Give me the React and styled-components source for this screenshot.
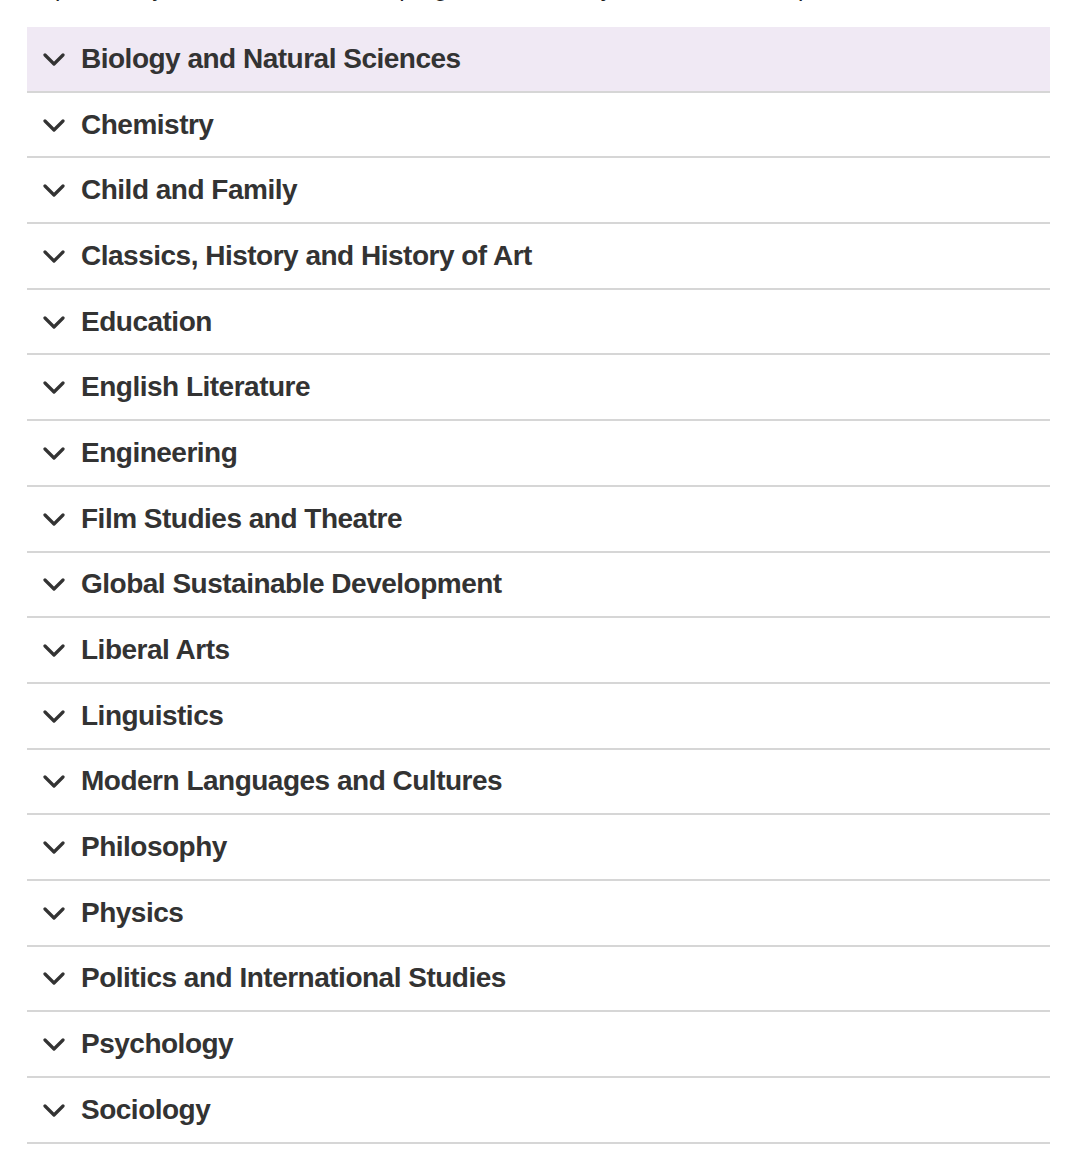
import React, { useState } from 'react';
import styled, { createGlobalStyle } from 'styled-components';

const subjects = [
  'Biology and Natural Sciences',
  'Chemistry',
  'Child and Family',
  'Classics, History and History of Art',
  'Education',
  'English Literature',
  'Engineering',
  'Film Studies and Theatre',
  'Global Sustainable Development',
  'Liberal Arts',
  'Linguistics',
  'Modern Languages and Cultures',
  'Philosophy',
  'Physics',
  'Politics and International Studies',
  'Psychology',
  'Sociology',
];

const Chevron = () => (
  <ChevronIcon viewBox="0 0 22 13" aria-hidden="true">
    <polyline points="2,2 11,11 20,2" />
  </ChevronIcon>
);

const App = () => {
  const [active, setActive] = useState(0);

  return (
    <>
      <GlobalStyle />
      <Page>
        <Intro>
          Explore subjects to find out what a programme of study is like at each department.
        </Intro>
        <Accordion>
          {subjects.map((name, i) => (
            <Item key={name}>
              <Header $active={active === i} onClick={() => setActive(i)}>
                <Chevron />
                <Title>{name}</Title>
              </Header>
            </Item>
          ))}
        </Accordion>
      </Page>
    </>
  );
};

const GlobalStyle = createGlobalStyle`
  body {
    margin: 0;
    background: #fff;
    font-family: "Helvetica Neue", "Liberation Sans", Arial, sans-serif;
    color: #333;
  }
`;

const Page = styled.div`
  padding: 0 30px 0 27px;
  overflow: hidden;
`;

const Intro = styled.p`
  margin: -26px 0 0;
  font-size: 24px;
  line-height: 28px;
  color: #222;
  white-space: nowrap;
`;

const Accordion = styled.div`
  margin-top: 25px;
  display: flex;
  flex-direction: column;
`;

const Item = styled.div`
  border-bottom: 2px solid #d6d6d6;
`;

const Header = styled.button`
  display: flex;
  align-items: center;
  gap: 16px;
  width: 100%;
  height: 63.7px;
  padding: 0 0 0 16px;
  border: none;
  background: ${(p) => (p.$active ? '#f0e9f4' : '#fff')};
  font: inherit;
  color: inherit;
  text-align: left;
  cursor: pointer;
`;

const ChevronIcon = styled.svg`
  width: 22px;
  height: 13px;
  flex-shrink: 0;
  margin-top: 1px;

  polyline {
    fill: none;
    stroke: #333;
    stroke-width: 3.2;
    stroke-linecap: round;
    stroke-linejoin: round;
  }
`;

const Title = styled.span`
  font-size: 28px;
  font-weight: 700;
  letter-spacing: -0.5px;
  color: #333;
`;

export default App;
